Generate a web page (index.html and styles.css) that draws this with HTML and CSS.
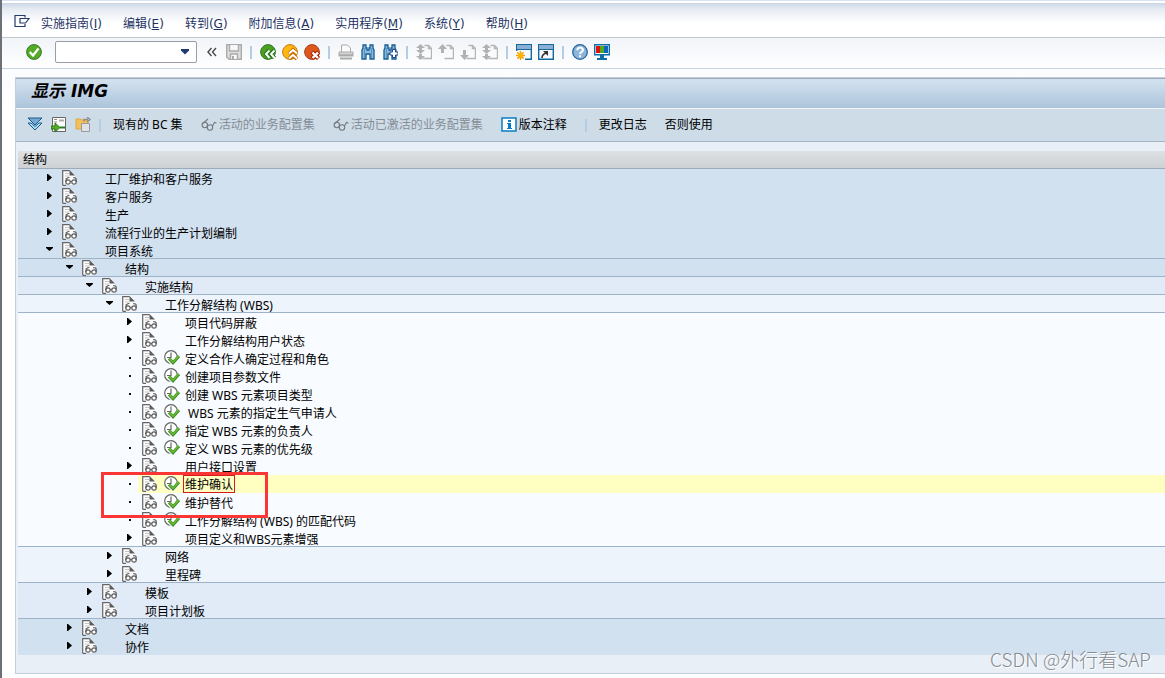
FILE: index.html
```html
<!DOCTYPE html>
<html lang="zh-CN">
<head>
<meta charset="utf-8">
<title>显示 IMG</title>
<link rel="stylesheet" href="styles.css">
</head>
<body>
<svg class="defs" aria-hidden="true">
  <symbol id="doc" viewBox="0 0 16 16">
    <path d="M1 1h8l4 4v10H1z" fill="#fdfdfd"/>
    <path d="M.7 15.500V.600h7M1 15.300h3" fill="none" stroke="#666" stroke-width="1.200"/>
    <path d="M7.500 0l5.500 5.500H7.500z" fill="#5c5c5c"/>
    <path d="M3 3.500h4M3 6h4M3 8.500h2" stroke="#c4c4c4"/>
    <g fill="#fff" stroke="#606060" stroke-width="1.200"><circle cx="6" cy="12" r="2.200"/><circle cx="12" cy="12" r="2.200"/><path d="M3.800 12C3.800 9 5 7.300 7.500 7.500M8.200 11.500h1.600M14.200 12V9.500c0-1.500-1-2-3-1.900" fill="none"/></g>
  </symbol>
  <symbol id="act" viewBox="0 0 16 16">
    <circle cx="7" cy="7" r="6.300" fill="#fff" stroke="#666" stroke-width="1.200"/>
    <path d="M7 2.500V8M3 7.500h4" stroke="#666" stroke-width="1.200"/>
    <path d="M5 9.500l4 4L15 6.500" fill="none" stroke="#fff" stroke-width="4"/>
    <path d="M5 8.500l4 4.200L15 6" fill="none" stroke="#3c8a24" stroke-width="3.200"/>
    <path d="M5.200 8.500l3.800 3.800L14.700 6" fill="none" stroke="#66bb36" stroke-width="1.800"/>
  </symbol>
  <symbol id="right" viewBox="0 0 8 8"><path d="M2 0h1l4 3.500L3 7H2z" fill="#000"/></symbol>
  <symbol id="down" viewBox="0 0 8 8"><path d="M1 1h7v1L4.500 5 1 2z" fill="#000"/></symbol>
  <symbol id="dot" viewBox="0 0 8 8"><path d="M4 3h2v2H4z" fill="#111"/></symbol>
  <symbol id="glasses" viewBox="0 0 16 16"><g fill="none" stroke="#747a80" stroke-width="1.100"><circle cx="3.800" cy="8" r="2.700"/><circle cx="9" cy="10.500" r="2.700"/><path d="M1.300 7L7 2M6.300 8.500l.7.700M11.500 9L13.500 5.500 15.500 6"/></g></symbol>
  <symbol id="bino" viewBox="0 0 16 16"><path d="M3 1h3v3h1v2h2V4h1V1h3v3l1 2v9h-4V10H6v5H2V6l1-2z" fill="#8db9dd" stroke="#155f96" stroke-width="1.300"/><path d="M4.500 4v10M11.500 4v10" stroke="#5c97c4"/></symbol>
  <symbol id="page" viewBox="0 0 16 16"><path d="M8.500 1.500h4l3 3v10h-9M12.500 1.500v3h3" fill="none" stroke="#b5b5b5" stroke-width="1.400"/></symbol>
</svg>

<nav class="menubar" aria-label="菜单">
  <button class="menu-icon" aria-label="窗口菜单"><svg viewBox="0 0 16 14" fill="none" stroke="#233b6e" stroke-width="1.200"><path d="M11 3.500V1.500H1v11h10V10M6 4.500h9L11.500 9H6z"/></svg></button>
  <button>实施指南(<u>I</u>)</button>
  <button>编辑(<u>E</u>)</button>
  <button>转到(<u>G</u>)</button>
  <button>附加信息(<u>A</u>)</button>
  <button>实用程序(<u>M</u>)</button>
  <button>系统(<u>Y</u>)</button>
  <button>帮助(<u>H</u>)</button>
</nav>

<div class="toolbar">
  <button aria-label="回车"><svg viewBox="0 0 16 16"><circle cx="8" cy="8" r="7.400" fill="#55ab25" stroke="#38782e"/><path d="M3.800 8l3.200 3.500L12.500 4.500" fill="none" stroke="#fff" stroke-width="2.300"/></svg></button>
  <div class="combo"><input type="text" aria-label="命令"><button aria-label="打开列表"><svg viewBox="0 0 10 6"><path d="M1 0h8v1.500L5 5.500 1 1.500z" fill="#203a70"/></svg></button></div>
  <button class="collapse" aria-label="收起"><svg viewBox="0 0 10 10"><path d="M4.500 1L1 5l3.500 4M9 1L5.500 5 9 9" fill="none" stroke="#4a4a4a" stroke-width="1.400"/></svg></button>
  <button aria-label="保存" disabled><svg viewBox="0 0 16 16"><path d="M.7.7h14.600v14.600H3L.7 13z" fill="#dedede" stroke="#aaa" stroke-width="1.400"/><path d="M3.500 1v6h9V1M4.500 15v-5h7v5" fill="#f7f7f7" stroke="#aaa" stroke-width="1.400"/><path d="M6 12h2v3H6z" fill="#aaa"/></svg></button>
  <span class="sep"></span>
  <button aria-label="返回"><svg viewBox="0 0 16 16"><circle cx="8" cy="8" r="7.400" fill="#4ba021" stroke="#35762c"/><path d="M9.500 6L6 10l3.500 4M14.500 6L11 10l3.500 4" fill="none" stroke="#277719" stroke-width="4"/><path d="M9.500 6.500L6 10l3.500 4M14.500 6.500L11 10l3.500 4" fill="none" stroke="#fff" stroke-width="1.900"/></svg></button>
  <button aria-label="退出"><svg viewBox="0 0 16 16"><circle cx="8" cy="8" r="7.400" fill="#fdb814" stroke="#c47a12"/><path d="M7 10l4-4 4 4M7 15l4-4 4 4" fill="none" stroke="#c86f00" stroke-width="4"/><path d="M7 9.500l4-3.500 4 3.500M7 14.500l4-3.500 4 3.500" fill="none" stroke="#fff" stroke-width="1.900"/></svg></button>
  <button aria-label="取消"><svg viewBox="0 0 16 16"><circle cx="8" cy="8" r="7.400" fill="#dc571a" stroke="#a54222"/><path d="M8 8l6.500 6.500M14.500 8L8 14.500" stroke="#ae2500" stroke-width="4.500"/><path d="M8.500 8.500l5.500 5.500M14 8.500L8.500 14" stroke="#fff" stroke-width="2.400"/></svg></button>
  <span class="sep"></span>
  <button aria-label="打印" disabled><svg viewBox="0 0 16 16"><path d="M3.500 8V1h6l3 3v4" fill="#fafafa" stroke="#aaa"/><path d="M1 8h14v3H1z" fill="#d5d5d5" stroke="#aaa"/><path d="M.5 11.500h15M2 14.500h12" stroke="#aaa" stroke-width="2"/></svg></button>
  <button aria-label="查找"><svg><use href="#bino"/></svg></button>
  <button aria-label="查找下一个"><svg viewBox="0 0 16 16"><use href="#bino"/><path d="M8 8h2.500V5.500h3V8H16v3h-2.500v2.500h-3V11H8z" fill="#fff" stroke="#20468d"/></svg></button>
  <span class="sep"></span>
  <button aria-label="首页" disabled><svg viewBox="0 0 16 16"><use href="#page"/><path d="M4.500 0L9 4H6v2h3l-4.500 4L0 6h3V4H0zM3 10h3v2h3l-4.500 4L0 12h3z" fill="#b2b2b2"/></svg></button>
  <button aria-label="上一页" disabled><svg viewBox="0 0 16 16"><use href="#page"/><path d="M4.500 0L9 5H6v4H3V5H0z" fill="#b2b2b2"/></svg></button>
  <button aria-label="下一页" disabled><svg viewBox="0 0 16 16"><use href="#page"/><path d="M3 6h3v5h3l-4.500 5L0 11h3z" fill="#b2b2b2"/></svg></button>
  <button aria-label="末页" disabled><svg viewBox="0 0 16 16"><use href="#page"/><path d="M4.500 0L9 4H6v2h3l-4.500 4L0 6h3V4H0zM3 10h3v2h3l-4.500 4L0 12h3z" fill="#b2b2b2"/></svg></button>
  <span class="sep"></span>
  <button aria-label="新建会话"><svg viewBox="0 0 16 16"><path d="M.7.7h14.600v14.600H.7z" fill="#f8fbff" stroke="#15689c" stroke-width="1.400"/><path d="M1 1h14v4H1z" fill="#8aaed5"/><path d="M0 5.500h16" stroke="#15689c"/><path d="M0 7h9v9H0z" fill="#fff"/><path d="M4.500 7v9M0 11.500h9M1.300 8.300l6.400 6.400M7.700 8.300l-6.400 6.400" stroke="#f0a000" stroke-width="1.500"/><circle cx="4.500" cy="11.500" r="2.300" fill="#ffb800"/></svg></button>
  <button aria-label="创建快捷方式"><svg viewBox="0 0 16 16"><path d="M.7.7h14.600v14.600H.7z" fill="#f8fbff" stroke="#15689c" stroke-width="1.400"/><path d="M1 1h14v4H1z" fill="#8aaed5"/><path d="M0 5.500h16" stroke="#15689c"/><path d="M4 14c0-3 1-4 4-5" fill="none" stroke="#333" stroke-width="1.600"/><path d="M5 7h5v5z" fill="#333"/></svg></button>
  <span class="sep"></span>
  <button aria-label="帮助"><svg viewBox="0 0 16 16"><circle cx="8" cy="8" r="7.300" fill="#8bb5dc" stroke="#28659c" stroke-width="1.300"/><path d="M5.300 6.200C5.300 2.800 11 2.800 11 6c0 2-3 2-3 4" fill="none" stroke="#fff" stroke-width="2"/><path d="M7 11.200h2v2H7z" fill="#fff"/></svg></button>
  <button aria-label="定制本地布局"><svg viewBox="0 0 16 16"><path d="M.7.700h14.600v10H.7z" fill="#fff" stroke="#0d6fa8" stroke-width="1.400"/><path d="M2 2h4v7H2z" fill="#e01010"/><path d="M6 2h4v7H6z" fill="#50ac18"/><path d="M10 2h4v7h-4z" fill="#1065bb"/><path d="M6 11h4v3h3v2H3v-2h3z" fill="#0d6fa8"/></svg></button>
</div>

<main class="panel">
  <h1>显示 IMG</h1>
  <div class="actions">
    <button class="tool" aria-label="全部展开"><svg viewBox="0 0 16 16"><path d="M1 1h14L8 8z" fill="#78a8cf" stroke="#145c90"/><path d="M1 6h3l4 3.500L12 6h3l-7 7z" fill="#b0daf0" stroke="#145c90"/></svg></button>
    <button class="tool" aria-label="定位"><svg viewBox="0 0 16 16"><path d="M1.500.5h13v14h-13z" fill="#fff" stroke="#666"/><path d="M3 2.500h3M3 5h3M3 13h3" stroke="#888"/><path d="M8 3.500h5" stroke="#aaa" stroke-width="2"/><path d="M9 10.500h5" stroke="#277c25" stroke-width="2"/><path d="M0 9h4V6l5 4.500L4 15v-3H0z" fill="#55ad23" stroke="#28751b"/></svg></button>
    <button class="tool" aria-label="附加信息"><svg viewBox="0 0 16 16"><path d="M1 2h5l1 1h6v9H1z" fill="#f4c05a" stroke="#ddaa48"/><path d="M6.500 6.500h8v8h-8z" fill="#dce4ea" stroke="#999"/><path d="M9 4.500V2.500h4M12 0l3 2.500L12 5" fill="none" stroke="#8b8b8b" stroke-width="1.400"/></svg></button>
    <span class="sep"></span>
    <button>现有的 BC 集</button>
    <button disabled><svg><use href="#glasses"/></svg>活动的业务配置集</button>
    <button disabled><svg><use href="#glasses"/></svg>活动已激活的业务配置集</button>
    <button><svg viewBox="0 0 16 16"><path d="M1 1h14v13H1z" fill="#fff" stroke="#087dc0" stroke-width="1.500"/><path d="M7 3h3v2H7zM6 6h4v5h1v1H6v-1h1V7H6z" fill="#087dc0"/></svg>版本注释</button>
    <span class="sep"></span>
    <button>更改日志</button>
    <button>否则使用</button>
  </div>

  <section class="structure">
    <h2>结构</h2>
    <ul class="tree" role="tree">
      <li class="row l0"><button aria-label="展开"><svg><use href="#right"/></svg></button><svg><use href="#doc"/></svg><span>工厂维护和客户服务</span></li>
      <li class="row l0"><button aria-label="展开"><svg><use href="#right"/></svg></button><svg><use href="#doc"/></svg><span>客户服务</span></li>
      <li class="row l0"><button aria-label="展开"><svg><use href="#right"/></svg></button><svg><use href="#doc"/></svg><span>生产</span></li>
      <li class="row l0"><button aria-label="展开"><svg><use href="#right"/></svg></button><svg><use href="#doc"/></svg><span>流程行业的生产计划编制</span></li>
      <li class="row l0 line"><button aria-label="折叠"><svg><use href="#down"/></svg></button><svg><use href="#doc"/></svg><span>项目系统</span></li>
      <li class="row l1 line"><button aria-label="折叠"><svg><use href="#down"/></svg></button><svg><use href="#doc"/></svg><span>结构</span></li>
      <li class="row l2 line"><button aria-label="折叠"><svg><use href="#down"/></svg></button><svg><use href="#doc"/></svg><span>实施结构</span></li>
      <li class="row l3 line"><button aria-label="折叠"><svg><use href="#down"/></svg></button><svg><use href="#doc"/></svg><span>工作分解结构 (WBS)</span></li>
      <li class="row l4"><button aria-label="展开"><svg><use href="#right"/></svg></button><svg><use href="#doc"/></svg><span>项目代码屏蔽</span></li>
      <li class="row l4"><button aria-label="展开"><svg><use href="#right"/></svg></button><svg><use href="#doc"/></svg><span>工作分解结构用户状态</span></li>
      <li class="row l4"><i><svg><use href="#dot"/></svg></i><svg><use href="#doc"/></svg><svg><use href="#act"/></svg><span>定义合作人确定过程和角色</span></li>
      <li class="row l4"><i><svg><use href="#dot"/></svg></i><svg><use href="#doc"/></svg><svg><use href="#act"/></svg><span>创建项目参数文件</span></li>
      <li class="row l4"><i><svg><use href="#dot"/></svg></i><svg><use href="#doc"/></svg><svg><use href="#act"/></svg><span>创建 WBS 元素项目类型</span></li>
      <li class="row l4"><i><svg><use href="#dot"/></svg></i><svg><use href="#doc"/></svg><svg><use href="#act"/></svg><span>&nbsp;WBS 元素的指定生气申请人</span></li>
      <li class="row l4"><i><svg><use href="#dot"/></svg></i><svg><use href="#doc"/></svg><svg><use href="#act"/></svg><span>指定 WBS 元素的负责人</span></li>
      <li class="row l4"><i><svg><use href="#dot"/></svg></i><svg><use href="#doc"/></svg><svg><use href="#act"/></svg><span>定义 WBS 元素的优先级</span></li>
      <li class="row l4"><button aria-label="展开"><svg><use href="#right"/></svg></button><svg><use href="#doc"/></svg><span>用户接口设置</span></li>
      <li class="row l4 selected"><i><svg><use href="#dot"/></svg></i><svg><use href="#doc"/></svg><svg><use href="#act"/></svg><span>维护确认</span><div class="mark"></div></li>
      <li class="row l4"><i><svg><use href="#dot"/></svg></i><svg><use href="#doc"/></svg><svg><use href="#act"/></svg><span>维护替代</span></li>
      <li class="row l4"><i><svg><use href="#dot"/></svg></i><svg><use href="#doc"/></svg><svg><use href="#act"/></svg><span>工作分解结构 (WBS) 的匹配代码</span></li>
      <li class="row l4 line"><button aria-label="展开"><svg><use href="#right"/></svg></button><svg><use href="#doc"/></svg><span>项目定义和WBS元素增强</span></li>
      <li class="row l3"><button aria-label="展开"><svg><use href="#right"/></svg></button><svg><use href="#doc"/></svg><span>网络</span></li>
      <li class="row l3 line"><button aria-label="展开"><svg><use href="#right"/></svg></button><svg><use href="#doc"/></svg><span>里程碑</span></li>
      <li class="row l2"><button aria-label="展开"><svg><use href="#right"/></svg></button><svg><use href="#doc"/></svg><span>模板</span></li>
      <li class="row l2 line"><button aria-label="展开"><svg><use href="#right"/></svg></button><svg><use href="#doc"/></svg><span>项目计划板</span></li>
      <li class="row l1"><button aria-label="展开"><svg><use href="#right"/></svg></button><svg><use href="#doc"/></svg><span>文档</span></li>
      <li class="row l1"><button aria-label="展开"><svg><use href="#right"/></svg></button><svg><use href="#doc"/></svg><span>协作</span></li>
    </ul>
  </section>
</main>
<div class="watermark">CSDN @外行看SAP</div>
</body>
</html>
```
FILE: styles.css
```css
* { box-sizing: border-box; }
body {
  margin: 0;
  min-height: 100vh;
  border-left: 2px solid #6c7077;
  background: linear-gradient(#f4f7fb, #fff 120px);
  color: #000;
  font: 12px/18px "Noto Sans", "Noto Sans CJK SC", sans-serif;
  overflow-x: hidden;
}
.defs { display: none; }
button { margin: 0; padding: 0; border: 0; background: none; font: inherit; color: inherit; white-space: nowrap; }
svg { display: block; flex: none; width: 16px; height: 16px; }

.menubar {
  display: flex;
  align-items: center;
  gap: 21px;
  height: 38px;
  padding: 9px 12px 0;
  border-top: 1px solid #d7e2f3;
  border-bottom: 1px solid #c3c6cb;
  background: linear-gradient(#fff 2px, #c9d5e6 2px, #e6ebf3 8px, #fff 22px);
  color: #1d3263;
  font-family: "DejaVu Sans", "Noto Sans CJK SC", sans-serif;
}
.menu-icon { margin-right: -10px; }
.menu-icon svg { height: 14px; margin-bottom: 6px; }

.toolbar {
  display: flex;
  align-items: center;
  gap: 6px;
  height: 31px;
  padding: 0 24px 2px;
  border-bottom: 1px solid #c8d3e4;
  background: linear-gradient(#f1f4f9, #fff);
}
.combo {
  display: flex;
  align-items: center;
  width: 142px;
  height: 22px;
  margin: 0 4px 0 7px;
  padding-right: 6px;
  border: 1px solid #999ea5;
  border-radius: 2px;
  background: #fff;
}
.combo input { flex: 1; min-width: 0; height: 18px; border: 0; outline: 0; background: none; font: inherit; }
.combo svg { width: 10px; height: 6px; }
.collapse { margin-right: 3px; }
.collapse svg { width: 10px; height: 10px; }
.sep { flex: none; width: 2px; height: 13px; margin: 0 2px; background: #b4cce4; }

.panel {
  margin: 8px 0 0 13px;
  border: solid #c3cddb;
  border-width: 1px 0 1px 1px;
  background: #e9eff7;
}
h1 {
  height: 31px;
  margin: 0;
  padding: 0 15px;
  border-top: 1px solid #9ca9bd;
  border-bottom: 1px solid #f0f5fa;
  background: linear-gradient(#d4e2ef, #acc4db);
  font: italic bold 17px/25px "DejaVu Sans", "Noto Sans CJK SC", sans-serif;
}
.actions {
  display: flex;
  align-items: center;
  height: 33px;
  gap: 18px;
  padding: 0 11px;
  border-bottom: 1px solid #a5b5c6;
  background: #cedce8;
}
.actions button { display: flex; align-items: center; gap: 2px; }
.actions button:disabled { color: #858d95; }
.actions .tool { margin-right: -10px; }
.actions .sep { margin: 0 -6px 0 0; }

.structure { margin: 9px 0 18px 2px; }
h2 {
  height: 18px;
  margin: 0;
  padding: 0 5px;
  border-bottom: 1px solid #9eabb6;
  background: linear-gradient(#dde1e3, #cdd1d4);
  font: inherit;
}
.tree { margin: 0; padding: 0; list-style: none; }
.row { display: flex; position: relative; height: 18px; padding-top: 1px; }
.row > button, .row > i { flex: none; width: 8px; height: 8px; margin: 4px 9px 0 0; }
.row > button svg, .row > i svg { width: 8px; height: 8px; }
.row > svg + svg { margin-left: 6px; }
.row > span { margin-left: 26px; padding: 1px 1px 0; white-space: nowrap; }
.row > svg + svg + span { margin-left: 4px; }
.l0 { padding-left: 27px; background: #d2e1f0; }
.l1 { padding-left: 47px; background: #d2e1f0; }
.l2 { padding-left: 67px; background: #e1ebf7; }
.l3 { padding-left: 87px; background: #edf4fc; }
.l4 { padding-left: 107px; background: #f8fbff; }
.line { border-bottom: 1px solid #9fb3c8; }
.selected { background: linear-gradient(90deg, #f8fbff 120px, #ffffc2 120px); }
.selected > span { height: 16px; padding: 0 1px; outline: 1px solid #d51c1c; line-height: 18px; }
.mark { position: absolute; z-index: 1; left: 83px; top: -3px; width: 167px; height: 46px; border: 3px solid #fc3535; }
.watermark {
  position: absolute;
  right: 14px;
  bottom: 6px;
  color: #858b91;
  font: 300 19px/26px "Noto Sans CJK SC", sans-serif;
  text-shadow: 1px 1px 0 #fff;
}
```
